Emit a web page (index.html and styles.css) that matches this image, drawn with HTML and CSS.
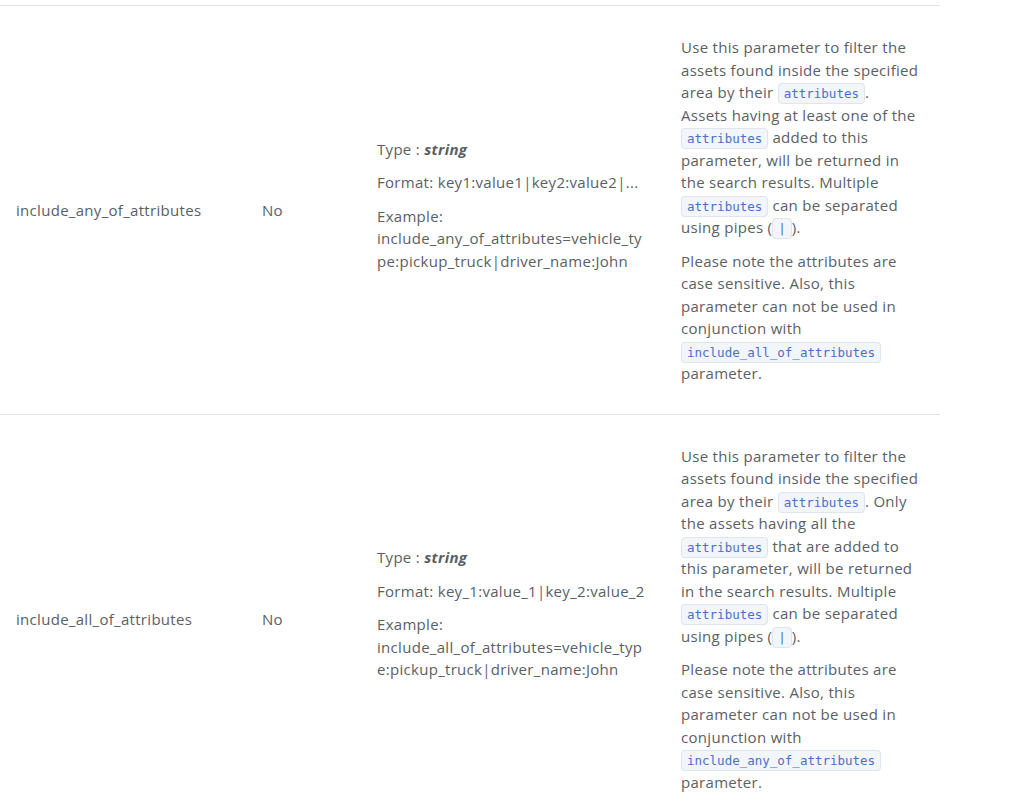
FILE: index.html
```html
<!DOCTYPE html>
<html lang="en">
<head>
<meta charset="utf-8">
<title>Parameters</title>
<link rel="stylesheet" href="styles.css">
</head>
<body>
<div class="params">
  <div class="row">
    <div class="cell name">include_any_of_attributes</div>
    <div class="cell req">No</div>
    <div class="cell type">
      <p>Type : <strong><em>string</em></strong></p>
      <p>Format: key1:value1|key2:value2|...</p>
      <p>Example: include_any_of_attributes=vehicle_type:pickup_truck|driver_name:John</p>
    </div>
    <div class="cell desc">
      <p>Use this parameter to filter the assets found inside the specified area by their <code>attributes</code>. Assets having at least one of the <code>attributes</code> added to this parameter, will be returned in the search results. Multiple <code>attributes</code> can be separated using pipes (<code>|</code>).</p>
      <p>Please note the attributes are case sensitive. Also, this parameter can not be used in conjunction with <code>include_all_of_attributes</code> parameter.</p>
    </div>
  </div>
  <div class="row">
    <div class="cell name">include_all_of_attributes</div>
    <div class="cell req">No</div>
    <div class="cell type">
      <p>Type : <strong><em>string</em></strong></p>
      <p>Format: key_1:value_1|key_2:value_2</p>
      <p>Example: include_all_of_attributes=vehicle_type:pickup_truck|driver_name:John</p>
    </div>
    <div class="cell desc">
      <p>Use this parameter to filter the assets found inside the specified area by their <code>attributes</code>. Only the assets having all the <code>attributes</code> that are added to this parameter, will be returned in the search results. Multiple <code>attributes</code> can be separated using pipes (<code>|</code>).</p>
      <p>Please note the attributes are case sensitive. Also, this parameter can not be used in conjunction with <code>include_any_of_attributes</code> parameter.</p>
    </div>
  </div>
</div>
</body>
</html>
```

FILE: styles.css
```css
html, body {
  margin: 0;
  padding: 0;
  background: #ffffff;
}
body {
  padding-top: 5px;
  font-family: "Open Sans", "Lato", sans-serif;
  font-size: 15px;
  letter-spacing: 0.3px;
  line-height: 22.5px;
  color: #5a5f66;
}
.params {
  width: 940px;
  border-top: 1px solid #e3e3e3;
}
.row {
  display: grid;
  grid-template-columns: 246px 115px 304px 275px;
  align-items: center;
  border-bottom: 1px solid #e3e3e3;
}
.cell {
  padding: 30px 16px 29px;
  overflow-wrap: anywhere;
}
.desc {
  padding-right: 21px;
}
.cell p {
  margin: 0 0 11px;
}
.desc p:last-child {
  margin-bottom: 0;
}
code {
  font-family: "DejaVu Sans Mono", "Liberation Mono", monospace;
  font-size: 12.5px;
  letter-spacing: 0;
  line-height: 1;
  color: #4a70c9;
  background: #f2f5f9;
  border: 1px solid #dfe5ec;
  border-radius: 4px;
  padding: 2px 5px;
}
strong {
  font-weight: 700;
}
```
